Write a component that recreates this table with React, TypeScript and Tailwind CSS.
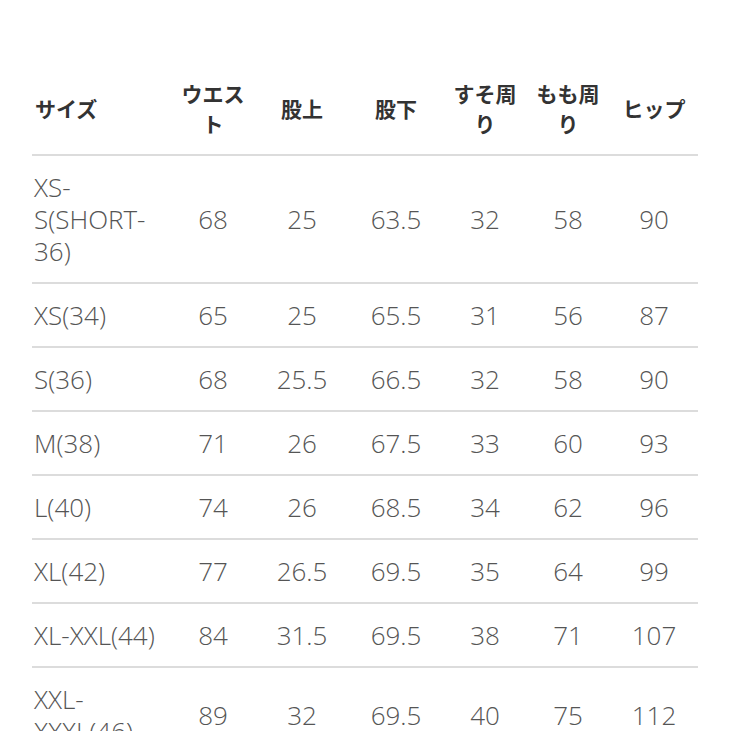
export default function App() {
  const headers = [
    { label: 'サイズ', w: 'w-[138px]', align: 'text-left pl-[3px]' },
    { label: 'ウエスト', w: 'w-[86px]', align: 'text-center px-2' },
    { label: '股上', w: 'w-[92px]', align: 'text-center px-2' },
    { label: '股下', w: 'w-[96px]', align: 'text-center px-2' },
    { label: 'すそ周り', w: 'w-[82px]', align: 'text-center px-2' },
    { label: 'もも周り', w: 'w-[84px]', align: 'text-center px-2' },
    { label: 'ヒップ', w: 'w-[88px]', align: 'text-center px-2' },
  ];

  const rows = [
    ['XS-S(SHORT-36)', '68', '25', '63.5', '32', '58', '90'],
    ['XS(34)', '65', '25', '65.5', '31', '56', '87'],
    ['S(36)', '68', '25.5', '66.5', '32', '58', '90'],
    ['M(38)', '71', '26', '67.5', '33', '60', '93'],
    ['L(40)', '74', '26', '68.5', '34', '62', '96'],
    ['XL(42)', '77', '26.5', '69.5', '35', '64', '99'],
    ['XL-XXL(44)', '84', '31.5', '69.5', '38', '71', '107'],
    ['XXL-XXXL(46)', '89', '32', '69.5', '40', '75', '112'],
  ];

  return (
    <div className="w-[731px] h-[731px] overflow-hidden bg-white pt-[62px] pl-[32px]">
      <table className="table-fixed w-[666px] border-collapse">
        <thead>
          <tr className="border-b-2 border-[#dcdcdc]">
            {headers.map((h, i) => (
              <th
                key={i}
                className={`${h.w} ${h.align} py-[16px] text-[21px] leading-[30px] font-bold text-[#333] [font-family:'Noto_Sans_CJK_JP',sans-serif]`}
              >
                {h.label}
              </th>
            ))}
          </tr>
        </thead>
        <tbody>
          {rows.map((row, r) => (
            <tr key={r} className="border-b-2 border-[#dcdcdc]">
              {row.map((cell, c) => (
                <td
                  key={c}
                  className={`${c === 0 ? 'text-left pl-[2px] pr-1' : 'text-center px-1'} py-[15px] text-[26px] leading-[32px] font-light text-[#555] [font-family:'Open_Sans',sans-serif]`}
                >
                  {cell}
                </td>
              ))}
            </tr>
          ))}
        </tbody>
      </table>
    </div>
  );
}
